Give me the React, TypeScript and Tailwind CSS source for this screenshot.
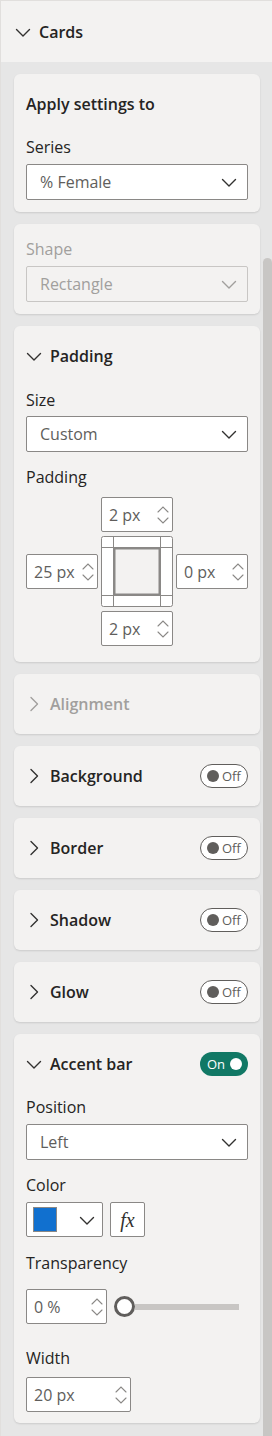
import React from "react";

const Chevron = ({ dir, color = "#323130" }: { dir: "down" | "right" | "up"; color?: string }) => {
  const d =
    dir === "down"
      ? "M1.5 5.5 L8 12 L14.5 5.5"
      : dir === "right"
        ? "M5 1.5 L11.5 8 L5 14.5"
        : "M1.5 11 L8 4.5 L14.5 11";
  return (
    <svg width="16" height="16" viewBox="0 0 16 16" className="shrink-0">
      <path d={d} fill="none" stroke={color} strokeWidth="1.4" strokeLinecap="round" strokeLinejoin="round" />
    </svg>
  );
};

const Spinner = () => (
  <svg width="12" height="22" viewBox="0 0 12 22" className="shrink-0">
    <path d="M1 8 L6 3 L11 8" fill="none" stroke="#8a8886" strokeWidth="1.1" strokeLinecap="round" />
    <path d="M1 14 L6 19 L11 14" fill="none" stroke="#8a8886" strokeWidth="1.1" strokeLinecap="round" />
  </svg>
);

const Dropdown = ({ value, disabled }: { value: string; disabled?: boolean }) => (
  <div
    className={`flex h-[36px] items-center justify-between rounded-[2px] border pl-[13px] pr-[10px] text-[16px] ${
      disabled ? "border-[#c8c6c4] bg-[#f3f2f1] text-[#a19f9d]" : "border-[#8a8886] bg-white text-[#605e5c]"
    }`}
  >
    <span>{value}</span>
    <Chevron dir="down" color={disabled ? "#a19f9d" : "#323130"} />
  </div>
);

const NumInput = ({ value, className }: { value: string; className: string }) => (
  <div
    className={`flex h-[35px] items-center justify-between rounded-[2px] border border-[#8a8886] bg-white pl-[7px] pr-[3px] text-[16px] text-[#605e5c] ${className}`}
  >
    <span className="whitespace-nowrap">{value}</span>
    <Spinner />
  </div>
);

const Toggle = ({ on }: { on?: boolean }) =>
  on ? (
    <div className="flex h-[24px] w-[48px] items-center justify-between rounded-full bg-[#117865] pl-[7px] pr-[6px]">
      <span className="text-[13px] leading-none text-white">On</span>
      <span className="h-[12px] w-[12px] rounded-full bg-white" />
    </div>
  ) : (
    <div className="flex h-[24px] w-[48px] items-center gap-[3px] rounded-full border border-[#605e5c] bg-white pl-[6px]">
      <span className="h-[12px] w-[12px] rounded-full bg-[#605e5c]" />
      <span className="text-[13px] leading-none text-[#605e5c]">Off</span>
    </div>
  );

const Card = ({ children, className = "" }: { children: React.ReactNode; className?: string }) => (
  <div className={`rounded-[6px] bg-[#f3f2f1] px-[12px] shadow-[0_1px_2px_rgba(0,0,0,0.12)] ${className}`}>
    {children}
  </div>
);

const SectionHead = ({
  title,
  open,
  toggle,
  disabled,
  noChevron,
}: {
  title: string;
  open?: boolean;
  toggle?: "on" | "off";
  disabled?: boolean;
  noChevron?: boolean;
}) => (
  <div className="flex h-[60px] items-center justify-between">
    <div className="flex items-center gap-[8px]">
      {!noChevron && <Chevron dir={open ? "down" : "right"} color={disabled ? "#a19f9d" : "#323130"} />}
      <span className={`text-[16px] font-semibold ${disabled ? "text-[#a19f9d]" : "text-[#252423]"}`}>{title}</span>
    </div>
    {toggle && <Toggle on={toggle === "on"} />}
  </div>
);

const Label = ({ children, className = "", disabled }: { children: React.ReactNode; className?: string; disabled?: boolean }) => (
  <div className={`h-[20px] text-[16px] leading-[20px] ${disabled ? "text-[#a19f9d]" : "text-[#252423]"} ${className}`}>
    {children}
  </div>
);

const PadBox = () => (
  <svg width="72" height="71" viewBox="0 0 72 71">
    <rect x="0.5" y="0.5" width="71" height="70" rx="2" fill="#ffffff" stroke="#8a8886" />
    <line x1="12.5" y1="0.5" x2="12.5" y2="70.5" stroke="#8a8886" />
    <line x1="59.5" y1="0.5" x2="59.5" y2="70.5" stroke="#8a8886" />
    <line x1="0.5" y1="11.5" x2="71.5" y2="11.5" stroke="#8a8886" />
    <line x1="0.5" y1="59.5" x2="71.5" y2="59.5" stroke="#8a8886" />
    <rect x="13.5" y="12.5" width="45" height="46" fill="#f3f2f1" stroke="#8a8886" strokeWidth="2" />
  </svg>
);

export default function App() {
  return (
    <div className="w-[272px] border-l border-t border-[#e1dfdd] bg-[#e6e6e6] font-['Open_Sans',sans-serif]">
      <div className="flex h-[61px] items-center gap-[8px] bg-[#f3f2f1] pl-[14px]">
        <Chevron dir="down" />
        <span className="text-[16px] font-semibold text-[#252423]">Cards</span>
      </div>

      <div className="flex">
        <div className="flex flex-1 flex-col gap-[12px] pb-[13px] pl-[13px] pr-[3px] pt-[12px]">
          <Card className="pb-[12px]">
            <SectionHead title="Apply settings to" noChevron />
            <Label className="mt-[3px]">Series</Label>
            <div className="mt-[7px]">
              <Dropdown value="% Female" />
            </div>
          </Card>

          <Card className="pb-[12px] pt-[15px]">
            <Label disabled>Shape</Label>
            <div className="mt-[7px]">
              <Dropdown value="Rectangle" disabled />
            </div>
          </Card>

          <Card className="pb-[16px]">
            <SectionHead title="Padding" open />
            <Label className="mt-[4px]">Size</Label>
            <div className="mt-[6px]">
              <Dropdown value="Custom" />
            </div>
            <Label className="mt-[15px]">Padding</Label>
            <div className="mt-[10px] flex items-center gap-[3px]">
              <NumInput value="25 px" className="w-[72px]" />
              <div className="flex flex-col gap-[4px]">
                <NumInput value="2 px" className="w-[72px]" />
                <PadBox />
                <NumInput value="2 px" className="w-[72px]" />
              </div>
              <NumInput value="0 px" className="w-[72px]" />
            </div>
          </Card>

          <Card>
            <SectionHead title="Alignment" disabled />
          </Card>
          <Card>
            <SectionHead title="Background" toggle="off" />
          </Card>
          <Card>
            <SectionHead title="Border" toggle="off" />
          </Card>
          <Card>
            <SectionHead title="Shadow" toggle="off" />
          </Card>
          <Card>
            <SectionHead title="Glow" toggle="off" />
          </Card>

          <Card className="pb-[11px]">
            <SectionHead title="Accent bar" open toggle="on" />
            <Label className="mt-[3px]">Position</Label>
            <div className="mt-[7px]">
              <Dropdown value="Left" />
            </div>
            <Label className="mt-[15px]">Color</Label>
            <div className="mt-[7px] flex gap-[7px]">
              <div className="flex h-[35px] w-[77px] items-center justify-between rounded-[2px] border border-[#8a8886] bg-white pl-[6px] pr-[7px]">
                <span className="h-[25px] w-[24px] border border-[#8a8886] bg-[#1170cf]" />
                <Chevron dir="down" />
              </div>
              <div className="flex h-[35px] w-[35px] items-center justify-center rounded-[2px] border border-[#8a8886] bg-white font-['Liberation_Serif',serif] text-[20px] italic text-[#323130]">
                fx
              </div>
            </div>
            <Label className="mt-[16px]">Transparency</Label>
            <div className="mt-[16px] flex items-center">
              <NumInput value="0 %" className="w-[81px]" />
              <div className="ml-[7px] flex w-[125px] items-center">
                <span className="h-[21px] w-[21px] shrink-0 rounded-full border-[3px] border-[#605e5c] bg-white" />
                <span className="h-[6px] flex-1 bg-[#c8c6c4]" />
              </div>
            </div>
            <Label className="mt-[24px]">Width</Label>
            <div className="mt-[9px]">
              <NumInput value="20 px" className="w-[105px]" />
            </div>
          </Card>
        </div>

        <div className="flex w-[9px] flex-col pt-[196px]">
          <div className="flex-1 rounded-t-full bg-[#c8c6c4]" />
        </div>
      </div>
    </div>
  );
}
